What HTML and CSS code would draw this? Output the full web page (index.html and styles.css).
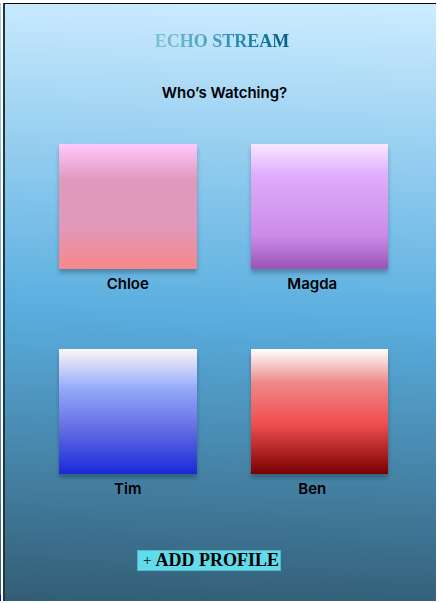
FILE: index.html
```html
<!DOCTYPE html>
<html lang="en">
<head>
  <meta charset="utf-8">
  <meta name="viewport" content="width=device-width, initial-scale=1">
  <title>Echo Stream</title>
  <link rel="stylesheet" href="styles.css">
</head>
<body>
  <div class="previous"></div>
  <main class="screen">
    <h1 class="brand">ECHO STREAM</h1>
    <h2 class="question">Who’s Watching?</h2>
    <div class="profiles">
      <button class="profile" type="button"><span class="tile chloe"></span><span class="name">Chloe</span></button>
      <button class="profile" type="button"><span class="tile magda"></span><span class="name">Magda</span></button>
      <button class="profile" type="button"><span class="tile tim"></span><span class="name">Tim</span></button>
      <button class="profile" type="button"><span class="tile ben"></span><span class="name">Ben</span></button>
    </div>
    <button class="add" type="button"><span class="plus">+</span>ADD PROFILE</button>
  </main>
</body>
</html>
```

FILE: styles.css
```css
* {
  box-sizing: border-box;
}

body {
  display: grid;
  grid-template-columns: 1px 1fr;
  column-gap: 2px;
  min-height: 100vh;
  margin: 0;
  padding: 3px 7px 2px 0;
  background: #fff;
  color: #000;
  font-family: Inter, sans-serif;
}

.previous {
  background: linear-gradient(#a9cfe3, #5aaedf 50%, #335d75 99%, #0000e0 99%);
}

.screen {
  display: flex;
  flex-direction: column;
  align-items: center;
  padding: 25px 0 30px;
  border-top: 1px solid #000;
  border-left: 2px solid #26343c;
  background: linear-gradient(182deg, #cdecff, #5aaedf 52%, #335d75);
}

.brand,
.question {
  margin: 0;
  line-height: 24px;
}

.brand {
  padding-left: 3px;
  background: linear-gradient(90deg, #82c4da, #2e8fb3 60%, #005f82);
  background-clip: text;
  -webkit-background-clip: text;
  color: transparent;
  font-family: "Liberation Serif", serif;
  font-size: 18px;
}

.question {
  margin-top: 28px;
  padding-left: 8px;
  font-size: 15px;
  font-weight: 600;
}

.profiles {
  display: grid;
  grid-template-columns: 1fr 1fr;
  gap: 53px 54px;
  width: 100%;
  margin-top: 39px;
  padding: 0 48px 0 54px;
}

.profile {
  display: flex;
  flex-direction: column;
  align-items: center;
  gap: 3px;
  padding: 0;
  border: 0;
  background: none;
  color: inherit;
  font: 600 15px/24px Inter, sans-serif;
}

.profile:nth-child(even) .name {
  padding-right: 14px;
}

.tile {
  width: 100%;
  height: 125px;
  box-shadow: 0 4px 4px rgb(0 0 0 / 25%);
}

.chloe {
  background: linear-gradient(#ffc8fc, #e099bd 29%, #e099bd 64%, #f78888);
}

.magda {
  background: linear-gradient(#f8e8ff, #e0acfb 25%, #cb8be8 73%, #9854b6);
}

.tim {
  background: linear-gradient(#fff5f5, #93a9f9 32%, #626be2 65%, #1829d6);
}

.ben {
  background: linear-gradient(#fff, #ee8988 27%, #f04e4e 60%, #790000);
}

.add {
  display: flex;
  align-items: center;
  gap: 4px;
  margin-top: 49px;
  margin-right: 23px;
  padding: 0 1px 0 5px;
  border: 1px solid #55b7ca;
  background: #62dbea;
  color: #000;
  font: bold 18px/19px "Liberation Serif", serif;
}

.plus {
  font-size: 15px;
  font-weight: normal;
}
```
